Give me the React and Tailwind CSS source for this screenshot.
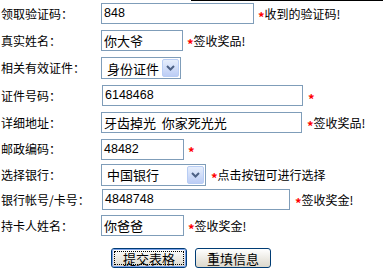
import React from "react";

const CJK = { fontFamily: '"Noto Sans CJK SC", "Liberation Sans", sans-serif' };

function Star({ className = "" }) {
  return (
    <span className={"text-[#ff0000] text-[13px] font-bold leading-none pt-[5px] " + className}>*</span>
  );
}

function Hint({ children }) {
  return <span className="text-[12px] leading-none text-black">{children}</span>;
}

function TextBox({ w, value, num, className = "" }) {
  return (
    <div
      className={
        "h-[21px] border border-[#7f9db9] bg-white flex items-center pl-[2px] text-black leading-none shrink-0 whitespace-pre " +
        (num ? "text-[12.5px] font-['Liberation_Sans'] " : "text-[13px] ") +
        w +
        " " +
        className
      }
    >
      {value}
    </div>
  );
}

function Chevron() {
  return (
    <svg width="9" height="6" viewBox="0 0 9 6">
      <path d="M1 1 L4.5 4.5 L8 1" fill="none" stroke="#4d6185" strokeWidth="2" />
    </svg>
  );
}

function SelectBox({ w, value }) {
  return (
    <div className={"h-[22px] border border-[#7f9db9] bg-white flex items-center justify-between pl-[5px] pr-[1px] text-[13px] leading-none text-black shrink-0 " + w}>
      <span>{value}</span>
      <div className="w-[17px] h-[18px] rounded-[2px] border border-[#b8cdf4] bg-gradient-to-b from-[#e6eefc] to-[#bccdf5] flex items-center justify-center">
        <Chevron />
      </div>
    </div>
  );
}

function Row({ h, label, children }) {
  return (
    <div className={"flex items-center " + h}>
      <div className="w-[101px] pl-[1px] text-[12px] leading-none text-black shrink-0">{label}</div>
      <div className="flex items-center">{children}</div>
    </div>
  );
}

export default function App() {
  return (
    <div className="relative w-[383px] h-[273px] bg-white overflow-hidden" style={CJK}>
      <div className="absolute top-0 left-[191px] right-0 h-[1px] bg-black" />
      <div className="flex flex-col">
        <Row h="h-[27px]" label="领取验证码：">
          <TextBox w="w-[153px]" value="848" num />
          <Star className="ml-[4px]" />
          <Hint>收到的验证码!</Hint>
        </Row>
        <Row h="h-[27px]" label="真实姓名：">
          <TextBox w="w-[82px]" value="你大爷" />
          <Star className="ml-[4px]" />
          <Hint>签收奖品!</Hint>
        </Row>
        <Row h="h-[28px]" label="相关有效证件：">
          <SelectBox w="w-[80px]" value="身份证件" />
        </Row>
        <Row h="h-[27px]" label="证件号码：">
          <TextBox w="w-[201px]" value="6148468" num className="ml-[1px]" />
          <Star className="ml-[5px]" />
        </Row>
        <Row h="h-[27px]" label="详细地址：">
          <TextBox w="w-[201px]" value="牙齿掉光  你家死光光" />
          <Star className="ml-[5px]" />
          <Hint>签收奖品!</Hint>
        </Row>
        <Row h="h-[26px]" label="邮政编码：">
          <TextBox w="w-[83px]" value="48482" num />
          <Star className="ml-[4px]" />
        </Row>
        <Row h="h-[25px]" label="选择银行：">
          <SelectBox w="w-[105px]" value="中国银行" />
          <Star className="ml-[5px]" />
          <Hint>点击按钮可进行选择</Hint>
        </Row>
        <Row h="h-[25px]" label="银行帐号/卡号：">
          <TextBox w="w-[188px]" value="4848748" num className="ml-[1px]" />
          <Star className="ml-[5px]" />
          <Hint>签收奖金!</Hint>
        </Row>
        <Row h="h-[27px]" label="持卡人姓名：">
          <TextBox w="w-[83px]" value="你爸爸" />
          <Star className="ml-[4px]" />
          <Hint>签收奖金!</Hint>
        </Row>
        <div className="flex pl-[111px] pt-[9px] gap-[8px]">
          <div className="w-[76px] h-[20px] rounded-[3px] border border-[#003c74] bg-gradient-to-b from-white to-[#dcd8cc]">
            <div className="w-full h-full rounded-[2px] border border-[#7aa1ea] p-[1px]">
              <div className="w-full h-full border border-dotted border-black flex items-center justify-center text-[13px] leading-none text-black">
                提交表格
              </div>
            </div>
          </div>
          <div className="w-[76px] h-[20px] rounded-[3px] border border-[#003c74] bg-gradient-to-b from-white to-[#dcd8cc] flex items-center justify-center text-[13px] leading-none text-black">
            重填信息
          </div>
        </div>
      </div>
    </div>
  );
}
